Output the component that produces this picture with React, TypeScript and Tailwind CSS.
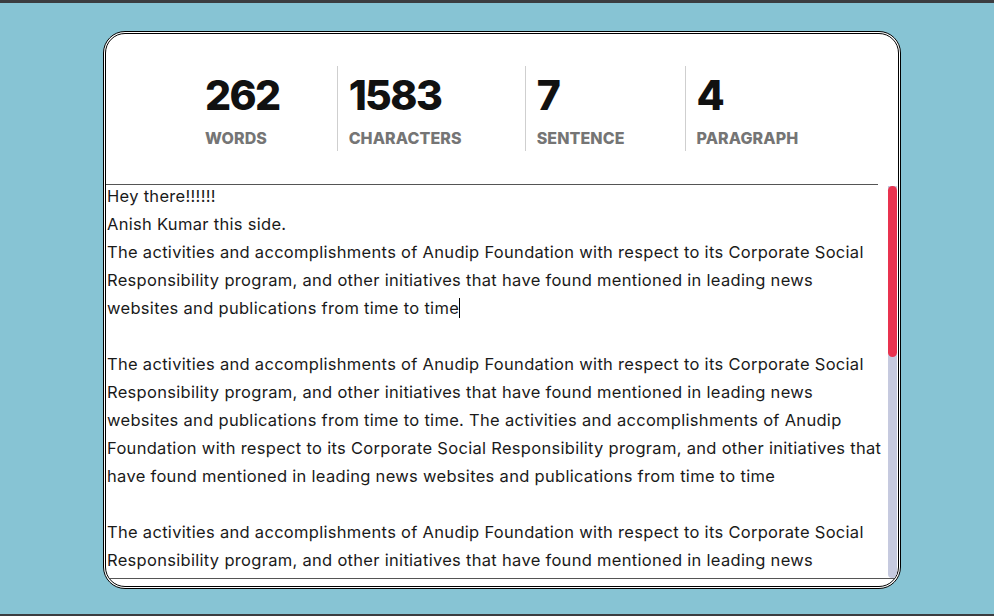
import React from "react";

const stats = [
  { value: "262", label: "WORDS", cls: "h-[85px] pr-[57px]" },
  { value: "1583", label: "CHARACTERS", cls: "h-[85px] border-l border-[#cfcfcf] pl-[11px] pr-[63px]" },
  { value: "7", label: "SENTENCE", cls: "h-[85px] border-l border-[#cfcfcf] pl-[11px] pr-[60px]" },
  { value: "4", label: "PARAGRAPH", cls: "h-[85px] border-l border-[#cfcfcf] pl-[11px] pr-[62px]" },
];

const lines: string[] = [
  "Hey there!!!!!!",
  "Anish Kumar this side.",
  "The activities and accomplishments of Anudip Foundation with respect to its Corporate Social",
  "Responsibility program, and other initiatives that have found mentioned in leading news",
  "websites and publications from time to time",
  "",
  "The activities and accomplishments of Anudip Foundation with respect to its Corporate Social",
  "Responsibility program, and other initiatives that have found mentioned in leading news",
  "websites and publications from time to time. The activities and accomplishments of Anudip",
  "Foundation with respect to its Corporate Social Responsibility program, and other initiatives that",
  "have found mentioned in leading news websites and publications from time to time",
  "",
  "The activities and accomplishments of Anudip Foundation with respect to its Corporate Social",
  "Responsibility program, and other initiatives that have found mentioned in leading news",
];

const App = () => {
  return (
    <div className="h-[616px] bg-[#87c4d4] border-t-[3px] border-b-[2px] border-[#3b3d40] overflow-hidden font-['Inter',sans-serif]">
      <div className="ml-[103px] mt-[28px] w-[798px] h-[558px] bg-white border-[3px] border-double border-black rounded-[22px] overflow-hidden flex flex-col pb-[7px]">
        <div className="mr-[20px] border-b border-[#555] pt-[32px] pb-[33px] pl-[99px] flex">
          {stats.map((s) => (
            <div key={s.label} className={s.cls}>
              <div className="text-[41px] leading-[58px] font-extrabold text-[#111] tracking-[-1.6px]">
                {s.value}
              </div>
              <div className="mt-[3px] text-[16px] leading-[22px] font-extrabold text-[#757575] tracking-[0.1px]">
                {s.label}
              </div>
            </div>
          ))}
        </div>
        <div className="flex-1 flex border-b border-[#555] overflow-hidden">
          <div className="flex-1 -mt-[3px] pl-[1px] text-[16.5px] tracking-[0.3px] leading-[28px] text-[#1a1a1a] overflow-hidden">
            {lines.map((l, i) => (
              <div key={i} className="h-[28px] whitespace-nowrap">
                {l}
                {i === 4 && (
                  <span className="inline-block w-[1px] h-[20px] bg-black align-[-4px]" />
                )}
              </div>
            ))}
          </div>
          <div className="w-[9px] mr-[1px] mt-[1px] bg-[#c6cadf] rounded-b-[4px] flex flex-col">
            <div className="h-[171px] bg-[#e9334f] rounded-full" />
          </div>
        </div>
      </div>
    </div>
  );
};

export default App;
